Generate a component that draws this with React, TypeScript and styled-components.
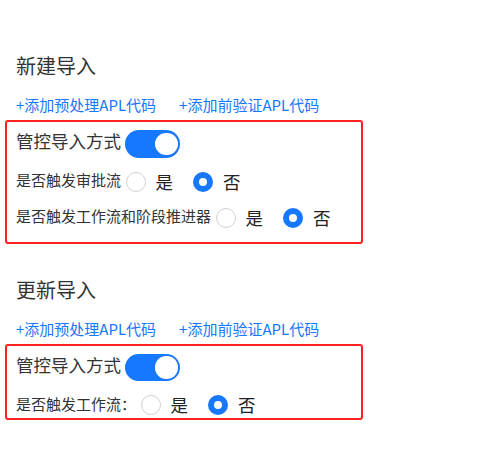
import React, { useState } from "react";
import styled, { createGlobalStyle } from "styled-components";

const GlobalStyle = createGlobalStyle`
  html, body {
    margin: 0;
    padding: 0;
    background: #ffffff;
  }
  body {
    font-family: "Noto Sans CJK SC", "Noto Sans", sans-serif;
    color: #333333;
  }
`;

const Page = styled.div`
  padding: 52px 0 0 5px;
`;

const Section = styled.section`
  margin-bottom: 32px;
`;

const Title = styled.h3`
  margin: 0 0 14px 11px;
  font-size: 20px;
  line-height: 28px;
  font-weight: 400;
  color: #333333;
`;

const LinkBar = styled.div`
  display: flex;
  gap: 23px;
  margin: 0 0 4px 11px;
`;

const TextLink = styled.a`
  font-size: 15px;
  line-height: 22px;
  color: #1677ff;
  text-decoration: none;
  cursor: pointer;
`;

const ControlBox = styled.div<{ $padBottom: number }>`
  width: 358px;
  box-sizing: border-box;
  border: 2px solid #ff2222;
  border-radius: 3px;
  padding: 8px 8px ${(p) => p.$padBottom}px;
  display: flex;
  flex-direction: column;
  gap: 12px;
`;

const HeaderRow = styled.div`
  display: flex;
  align-items: center;
  height: 27.5px;
`;

const HeaderLabel = styled.span`
  font-size: 17.5px;
  line-height: 24px;
  margin: 0 4px 5px 1px;
`;

const SwitchTrack = styled.button<{ $on: boolean }>`
  position: relative;
  width: 55px;
  height: 27.5px;
  padding: 0;
  border: none;
  border-radius: 14px;
  background: ${(p) => (p.$on ? "#1677ff" : "#bfbfbf")};
  cursor: pointer;
`;

const SwitchKnob = styled.span<{ $on: boolean }>`
  position: absolute;
  top: 2.5px;
  left: ${(p) => (p.$on ? "30px" : "2.5px")};
  width: 22.5px;
  height: 22.5px;
  border-radius: 50%;
  background: #ffffff;
`;

const FieldRow = styled.div`
  display: flex;
  align-items: center;
  height: 24px;
`;

const FieldLabel = styled.span`
  font-size: 15px;
  line-height: 20px;
  margin: 0 4.5px 3px 1px;
`;

const RadioOption = styled.label`
  display: inline-flex;
  align-items: center;
  margin-right: 10px;
  cursor: pointer;
`;

const RadioCircle = styled.span<{ $checked: boolean }>`
  width: 20px;
  height: 20px;
  box-sizing: border-box;
  border-radius: 50%;
  border: ${(p) => (p.$checked ? "6.25px solid #1677ff" : "1px solid #d0d0d0")};
  background: #ffffff;
`;

const RadioText = styled.span`
  padding: 0 10px;
  font-size: 17.5px;
  line-height: 24px;
  color: #222222;
`;

type YesNoProps = { label: string; initial?: boolean };

const YesNoField: React.FC<YesNoProps> = ({ label, initial = false }) => {
  const [value, setValue] = useState(initial);
  return (
    <FieldRow>
      <FieldLabel>{label}</FieldLabel>
      <RadioOption onClick={() => setValue(true)}>
        <RadioCircle $checked={value} />
        <RadioText>是</RadioText>
      </RadioOption>
      <RadioOption onClick={() => setValue(false)}>
        <RadioCircle $checked={!value} />
        <RadioText>否</RadioText>
      </RadioOption>
    </FieldRow>
  );
};

const ControlSwitch: React.FC = () => {
  const [on, setOn] = useState(true);
  return (
    <SwitchTrack $on={on} onClick={() => setOn(!on)}>
      <SwitchKnob $on={on} />
    </SwitchTrack>
  );
};

type ImportSectionProps = {
  title: string;
  fields: string[];
  padBottom: number;
};

const ImportSection: React.FC<ImportSectionProps> = ({ title, fields, padBottom }) => (
  <Section>
    <Title>{title}</Title>
    <LinkBar>
      <TextLink>+添加预处理APL代码</TextLink>
      <TextLink>+添加前验证APL代码</TextLink>
    </LinkBar>
    <ControlBox $padBottom={padBottom}>
      <HeaderRow>
        <HeaderLabel>管控导入方式</HeaderLabel>
        <ControlSwitch />
      </HeaderRow>
      {fields.map((f) => (
        <YesNoField key={f} label={f} />
      ))}
    </ControlBox>
  </Section>
);

const App: React.FC = () => (
  <>
    <GlobalStyle />
    <Page>
      <ImportSection
        title="新建导入"
        fields={["是否触发审批流", "是否触发工作流和阶段推进器"]}
        padBottom={12}
      />
      <ImportSection title="更新导入" fields={["是否触发工作流："]} padBottom={1} />
    </Page>
  </>
);

export default App;
